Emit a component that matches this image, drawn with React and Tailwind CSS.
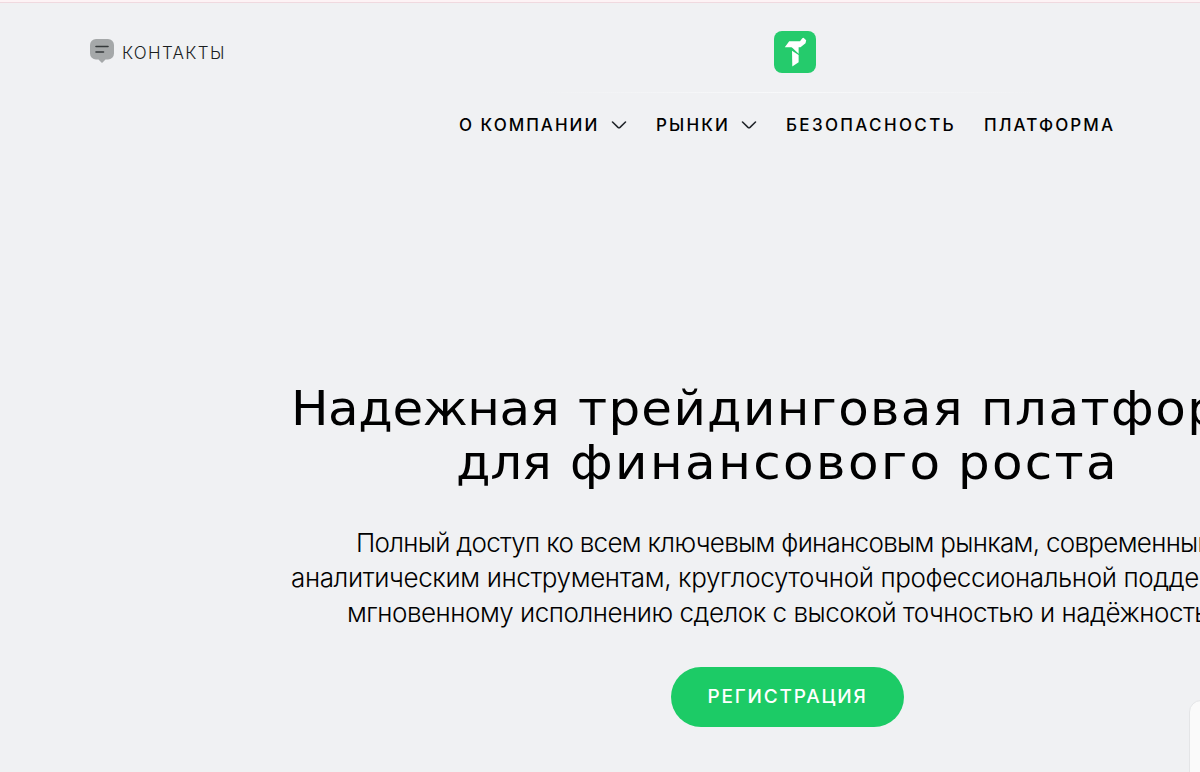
import React from 'react'

const navItems = [
  { label: 'О КОМПАНИИ', hasMenu: true, style: 'w-[140px] tracking-[2px]' },
  { label: 'РЫНКИ', hasMenu: true, style: 'w-[73px] tracking-[2.150px]' },
  { label: 'БЕЗОПАСНОСТЬ', hasMenu: false, style: 'w-[169px] tracking-[2.350px]' },
  { label: 'ПЛАТФОРМА', hasMenu: false, style: 'w-[130px] tracking-[2.100px]' }
]

const introLines = [
  { text: 'Полный доступ ко всем ключевым финансовым рынкам, современным', style: 'pl-[356px] tracking-[-0.700px]' },
  { text: 'аналитическим инструментам, круглосуточной профессиональной поддержке и', style: 'pl-[291px] tracking-[-0.380px]' },
  { text: 'мгновенному исполнению сделок с высокой точностью и надёжностью.', style: 'pl-[347px] tracking-[-0.480px]' }
]

const titleLines = [
  {
    pad: 'pl-[291px]',
    words: [
      { text: 'Надежная', style: 'w-[287px] tracking-[-0.400px]' },
      { text: 'трейдинговая', style: 'w-[403px] tracking-[1.250px]' },
      { text: 'платформа', style: 'w-[310px] tracking-[1.400px]' }
    ]
  },
  {
    pad: 'pl-[456px]',
    words: [
      { text: 'для', style: 'w-[114px] tracking-[-0.300px]' },
      { text: 'финансового', style: 'w-[388px] tracking-[2.350px]' },
      { text: 'роста', style: 'w-[160px] tracking-[2.200px]' }
    ]
  }
]

function ChatIcon() {
  return (
    <svg className="w-6 h-6" viewBox="0 0 24 24" fill="none">
      <path d="M6 0h12a6 6 0 0 1 6 6v8.500a6 6 0 0 1-6 6h-2.500L12.800 23.300a1 1 0 0 1-1.600 0L8.500 20.500H6a6 6 0 0 1-6-6V6a6 6 0 0 1 6-6z" fill="#a5a8a9" />
      <path d="M6 7.500h12M6 13h7.500" stroke="#35393b" strokeWidth="1.600" strokeLinecap="round" />
    </svg>
  )
}

function Logo() {
  return (
    <svg className="w-[42px] h-[42px]" viewBox="0 0 42 42">
      <rect width="42" height="42" rx="8" fill="#25cb6c" />
      <path d="M10.800 16.300 15.200 10.300H26L28.300 7.300 29.500 6.800 32.200 9.200 31.500 12.200 26.500 16.300z" fill="#fff" />
      <path d="M17.500 16 24.600 22.800V16z" fill="#fff" />
      <path d="M18 19.800 24.600 24V31.300L18.300 35.400z" fill="#fff" />
    </svg>
  )
}

function Chevron() {
  return (
    <svg className="w-4 h-4 ml-3" viewBox="0 0 16 16" fill="none">
      <path d="M1.500 5 7 10.300Q8 11.200 9 10.300L14.500 5" stroke="#22262b" strokeWidth="1.600" strokeLinecap="round" />
    </svg>
  )
}

function Header() {
  return (
    <header className="h-[158px] flex flex-col">
      <div className="h-[89px] flex items-start pl-[90px]">
        <a className="flex items-start gap-2 mt-[36px] w-[684px]">
          <ChatIcon />
          <span className="text-[17px] leading-6 tracking-[1.300px] text-[#1b1e1f] font-[350] pt-[2px]">КОНТАКТЫ</span>
        </a>
        <div className="mt-7">
          <Logo />
        </div>
      </div>
      <div className="h-px w-[510px] ml-[533px] bg-linear-to-r from-transparent via-[#f8f9fa] to-transparent" />
      <nav className="flex items-center gap-[29px] h-6 mt-5 pl-[459px]">
        {navItems.map(item => (
          <a key={item.label} className="flex items-center">
            <span className={`${item.style} text-[17px] leading-6 font-medium text-black whitespace-nowrap`}>{item.label}</span>
            {item.hasMenu && <Chevron />}
          </a>
        ))}
      </nav>
    </header>
  )
}

function App() {
  return (
    <div className="relative h-[772px] w-full overflow-hidden bg-[#f0f1f3] font-['Inter',sans-serif]">
      <div className="w-[1575px]">
        <div className="h-[3px] bg-[#fdf3f5] border-b border-[#f0d9df]" />
        <Header />

        <main className="flex flex-col">
          <h1 className="mt-[220px] text-[48px] leading-[54px] text-black font-['DejaVu_Sans',sans-serif] whitespace-nowrap">
            {titleLines.map(line => (
              <span key={line.pad} className={`flex ${line.pad}`}>
                {line.words.map(word => (
                  <span key={word.text} className={`shrink-0 ${word.style}`}>
                    <span className="inline-block origin-left scale-x-[1.04]">{word.text}</span>
                  </span>
                ))}
              </span>
            ))}
          </h1>
          <p className="mt-9 flex flex-col text-[26px] leading-[35px] font-[350] text-black whitespace-nowrap">
            {introLines.map(line => (
              <span key={line.text} className={line.style}>{line.text}</span>
            ))}
          </p>
          <button className="mt-[37px] self-center w-[233px] h-[60px] rounded-[30px] bg-[#1ccb66] text-white text-[19px] font-medium tracking-[1.800px]">
            РЕГИСТРАЦИЯ
          </button>
        </main>
      </div>

      {/* chat widget sits over the page corner */}
      <div className="absolute left-[1189px] top-[700px] w-[300px] h-[200px] rounded-xl border border-[#e4e5e7] bg-[#fafafa]" />
    </div>
  )
}

export default App
